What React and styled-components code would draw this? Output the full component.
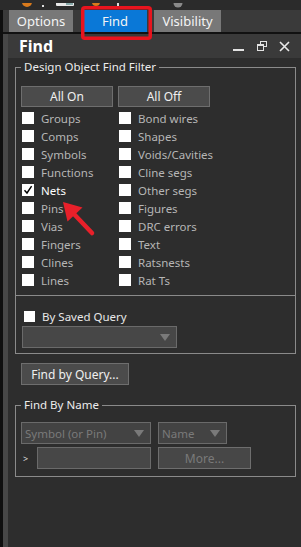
import React from "react";
import styled, { createGlobalStyle } from "styled-components";

const GlobalStyle = createGlobalStyle`
  html, body {
    margin: 0;
    padding: 0;
    background: #2d2d2d;
  }
  body {
    font-family: "Noto Sans", "Open Sans", sans-serif;
    font-size: 12px;
  }
  * {
    box-sizing: border-box;
  }
`;

const Screen = styled.div`
  position: relative;
  width: 301px;
  height: 547px;
  overflow: hidden;
  display: flex;
  flex-direction: column;
  background: #2d2d2d;
`;

const TopStrip = styled.div`
  flex: none;
  height: 10px;
  background: #2b2b2b;
`;

const Frame = styled.div`
  flex: 1;
  display: flex;
  flex-direction: column;
  border-left: 3px solid #0f0f0f;
`;

const TabBar = styled.div`
  flex: none;
  height: 24px;
  display: flex;
  padding-left: 6px;
  background: #3a3a3a;
  border-bottom: 2px solid #111;
`;

const Tab = styled.div`
  width: ${(p) => p.$w}px;
  margin-left: ${(p) => p.$ml || 0}px;
  background: ${(p) => (p.$active ? "#0a78d7" : "#787878")};
  color: #f4f4f4;
  font-size: 13px;
  display: flex;
  align-items: center;
  justify-content: center;
`;

const Window = styled.div`
  flex: 1;
  display: flex;
  flex-direction: column;
  border-left: 5px solid #474747;
`;

const TitleBar = styled.div`
  flex: none;
  height: 24px;
  display: flex;
  align-items: center;
  padding-left: 11px;
  background: #3a3a3a;
  color: #fff;
  font-size: 16px;
  font-weight: 700;
`;

const TitleIcons = styled.div`
  margin-left: auto;
  display: flex;
  align-items: center;
  gap: 12px;
  padding-right: 11px;
`;

const Content = styled.div`
  flex: 1;
  padding: 2px 5px 0 7px;
  background: #2d2d2d;
`;

const Group = styled.fieldset`
  margin: 0;
  min-width: 0;
  border: 1px solid #8a8a8a;
  padding: ${(p) => p.$pad};
`;

const Legend = styled.legend`
  padding: 0 3px;
  margin: 0;
  color: #ececec;
  font-size: 11.5px;
  line-height: 14px;
`;

const ButtonRow = styled.div`
  display: grid;
  grid-template-columns: 92px 92px;
  column-gap: 5px;
`;

const Button = styled.button`
  width: ${(p) => (p.$w ? `${p.$w}px` : "auto")};
  height: ${(p) => p.$h || 21}px;
  margin: 0;
  padding: 0;
  background: ${(p) => (p.$disabled ? "#474747" : "#4b4b4b")};
  border: 1px solid #6e6e6e;
  color: ${(p) => (p.$disabled ? "#7a7a7a" : "#f0f0f0")};
  font-family: inherit;
  font-size: 12px;
`;

const CheckGrid = styled.div`
  display: grid;
  grid-template-columns: 92px 92px;
  grid-template-rows: repeat(10, 18px);
  grid-auto-flow: column;
  column-gap: 5px;
  margin-top: 2px;
`;

const CheckRow = styled.label`
  display: flex;
  align-items: center;
  gap: 7px;
  padding-left: 1px;
  color: ${(p) => (p.$on ? "#ffffff" : "#b6b6b6")};
  font-size: 11.5px;
  white-space: nowrap;
`;

const Box = styled.span`
  flex: none;
  width: ${(p) => p.$size || 12}px;
  height: ${(p) => p.$size || 12}px;
  background: #fff;
  display: flex;
  align-items: center;
  justify-content: center;
`;

const Separator = styled.div`
  height: 1px;
  margin: 6px -5px 0;
  background: #8a8a8a;
`;

const SavedRow = styled.label`
  display: flex;
  align-items: center;
  gap: 7px;
  height: 16px;
  margin-top: 12px;
  padding-left: 3px;
  color: #e8e8e8;
  font-size: 11.5px;
`;

const Select = styled.div`
  width: ${(p) => p.$w}px;
  height: 22px;
  margin-left: ${(p) => p.$ml || 0}px;
  margin-top: ${(p) => p.$mt || 0}px;
  display: flex;
  align-items: center;
  padding: 0 6px 0 3px;
  background: ${(p) => p.$bg || "#474747"};
  border: 1px solid #6a6a6a;
  color: #7a7a7a;
  font-size: 11.5px;
`;

const Caret = styled.svg`
  margin-left: auto;
  flex: none;
`;

const QueryButton = styled(Button)`
  margin: 9px 0 0 6px;
`;

const NameGroup = styled(Group)`
  margin-top: 13px;
`;

const NameRow = styled.div`
  display: flex;
  align-items: center;
  gap: 7px;
  margin-top: ${(p) => p.$mt || 0}px;
`;

const Prompt = styled.span`
  width: 14px;
  padding-left: 2px;
  color: #ddd;
  font-size: 9px;
  margin-right: -7px;
`;

const TextInput = styled.div`
  width: 114px;
  height: 22px;
  margin-left: 2px;
  background: #474747;
  border: 1px solid #6a6a6a;
`;

const Overlay = styled.svg`
  position: absolute;
  left: 0;
  top: 0;
  pointer-events: none;
`;

const leftItems = [
  "Groups",
  "Comps",
  "Symbols",
  "Functions",
  "Nets",
  "Pins",
  "Vias",
  "Fingers",
  "Clines",
  "Lines",
];

const rightItems = [
  "Bond wires",
  "Shapes",
  "Voids/Cavities",
  "Cline segs",
  "Other segs",
  "Figures",
  "DRC errors",
  "Text",
  "Ratsnests",
  "Rat Ts",
];

const Check = ({ label, on }) => (
  <CheckRow $on={on}>
    <Box>
      {on && (
        <svg width="10" height="10" viewBox="0 0 10 10">
          <path d="M1.5 5.2 L4 8 L8.6 1.2" fill="none" stroke="#000" strokeWidth="1.4" />
        </svg>
      )}
    </Box>
    {label}
  </CheckRow>
);

const Arrow = () => (
  <Caret width="10" height="7" viewBox="0 0 10 7">
    <path d="M0 0 H10 L5 7 Z" fill="#7a7a7a" />
  </Caret>
);

export default function App() {
  return (
    <Screen>
      <GlobalStyle />
      <TopStrip>
        <svg width="301" height="10" viewBox="0 0 301 10">
          <circle cx="27" cy="-1" r="5" fill="#d97a1c" />
          <rect x="42" y="2" width="2" height="2" fill="#ddd" />
          <rect x="56" y="-3" width="18" height="6" rx="1" fill="#e8e8e8" />
          <rect x="66" y="0" width="7" height="2" fill="#8aa" />
          <circle cx="96" cy="-1" r="4" fill="#d97a1c" />
          <rect x="117" y="0" width="2" height="3" fill="#ddd" />
          <circle cx="178" cy="0" r="4.5" fill="#8a8a8a" />
        </svg>
      </TopStrip>
      <Frame>
        <TabBar>
          <Tab $w={64}>Options</Tab>
          <Tab $w={64} $ml={10} $active>
            Find
          </Tab>
          <Tab $w={67} $ml={7}>
            Visibility
          </Tab>
        </TabBar>
        <Window>
          <TitleBar>
            Find
            <TitleIcons>
              <svg width="12" height="12" viewBox="0 0 12 12">
                <rect x="0" y="9" width="11" height="2" fill="#e2e2e2" />
              </svg>
              <svg width="10" height="10" viewBox="0 0 10 10">
                <rect x="3.5" y="0.5" width="6" height="5" fill="none" stroke="#e2e2e2" />
                <rect x="0.5" y="3.5" width="6" height="6" fill="#3a3a3a" stroke="#e2e2e2" />
                <rect x="0.5" y="3.5" width="6" height="1.5" fill="#e2e2e2" />
              </svg>
              <svg width="11" height="11" viewBox="0 0 11 11">
                <path d="M1 1 L10 10 M10 1 L1 10" stroke="#e8e8e8" strokeWidth="1.6" />
              </svg>
            </TitleIcons>
          </TitleBar>
          <Content>
            <Group $pad="12px 5px 5px 5px">
              <Legend>Design Object Find Filter</Legend>
              <ButtonRow>
                <Button>All On</Button>
                <Button>All Off</Button>
              </ButtonRow>
              <CheckGrid>
                {leftItems.map((item) => (
                  <Check key={item} label={item} on={item === "Nets"} />
                ))}
                {rightItems.map((item) => (
                  <Check key={item} label={item} />
                ))}
              </CheckGrid>
              <Separator />
              <SavedRow>
                <Box $size={11} />
                By Saved Query
              </SavedRow>
              <Select $w={155} $ml={1} $mt={2}>
                <Arrow />
              </Select>
            </Group>
            <QueryButton $w={108} $h={22}>
              Find by Query...
            </QueryButton>
            <NameGroup $pad="10px 5px 7px 5px">
              <Legend>Find By Name</Legend>
              <NameRow>
                <Select $w={130} $bg="#434343">
                  Symbol (or Pin)
                  <Arrow />
                </Select>
                <Select $w={69} $bg="#434343">
                  Name
                  <Arrow />
                </Select>
              </NameRow>
              <NameRow $mt={3}>
                <Prompt>&gt;</Prompt>
                <TextInput />
                <Button $w={93} $h={22} $disabled>
                  More...
                </Button>
              </NameRow>
            </NameGroup>
          </Content>
        </Window>
      </Frame>
      <Overlay width="301" height="547" viewBox="0 0 301 547">
        <rect
          x="82.75"
          y="7.75"
          width="67.5"
          height="30.5"
          rx="2"
          fill="none"
          stroke="#e8141e"
          strokeWidth="3.5"
        />
        <path d="M92 233 L73 213" stroke="#e8202a" strokeWidth="4.5" strokeLinecap="round" />
        <path d="M63 202 L82.5 207.5 L67.5 221.5 Z" fill="#e8202a" />
      </Overlay>
    </Screen>
  );
}
